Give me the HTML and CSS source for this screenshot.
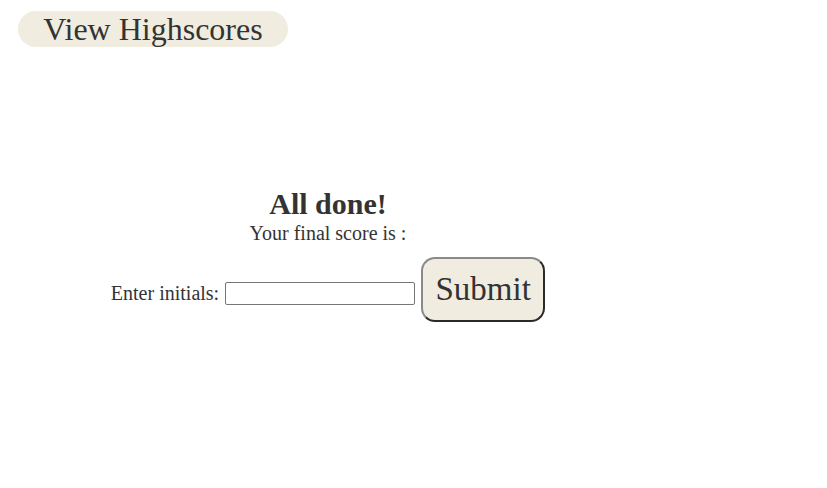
FILE: index.html
```html
<!DOCTYPE html>
<html>
<head>
<meta charset="utf-8">
<link rel="stylesheet" href="styles.css">
</head>
<body>
<header class="top">
  <button class="highscores">View Highscores</button>
</header>
<main class="panel">
  <h1 class="title">All done!</h1>
  <p class="score">Your final score is :</p>
  <form class="entry">
    <label class="label" for="initials">Enter initials:</label>
    <input class="field" id="initials" type="text">
    <button class="submit" type="button">Submit</button>
  </form>
</main>
</body>
</html>
```
FILE: styles.css
```css
html, body {
  margin: 0;
  padding: 0;
  background: #ffffff;
}
body {
  font-family: "Liberation Serif", "DejaVu Serif", serif;
  color: #333333;
}
.top {
  padding: 11px 0 0 18px;
  display: flex;
}
.highscores {
  font-family: inherit;
  color: #333333;
  font-size: 32px;
  line-height: 36px;
  height: 36px;
  width: 270px;
  padding: 0;
  border: none;
  border-radius: 18px;
  background: #f0ece0;
}
.panel {
  width: 656px;
  display: flex;
  flex-direction: column;
  align-items: center;
  padding-top: 140px;
}
.title {
  margin: 0;
  font-size: 30px;
  line-height: 34px;
  font-weight: bold;
}
.score {
  margin: 0;
  font-size: 20px;
  line-height: 24px;
}
.entry {
  margin-top: 12px;
  display: flex;
  align-items: center;
  gap: 6px;
}
.label {
  font-size: 20px;
  margin-top: 8px;
}
.field {
  width: 188px;
  height: 21px;
  padding: 0;
  border: 1px solid #767676;
  border-radius: 2px;
  margin: 8px 0 0 0;
  font-family: inherit;
}
.submit {
  font-family: inherit;
  color: #333333;
  font-size: 33px;
  width: 124px;
  height: 65px;
  padding: 0;
  border: 2px solid;
  border-color: #8a8a8a #2a2a2a #2a2a2a #8a8a8a;
  border-radius: 14px;
  background: #f0ece0;
}
```
